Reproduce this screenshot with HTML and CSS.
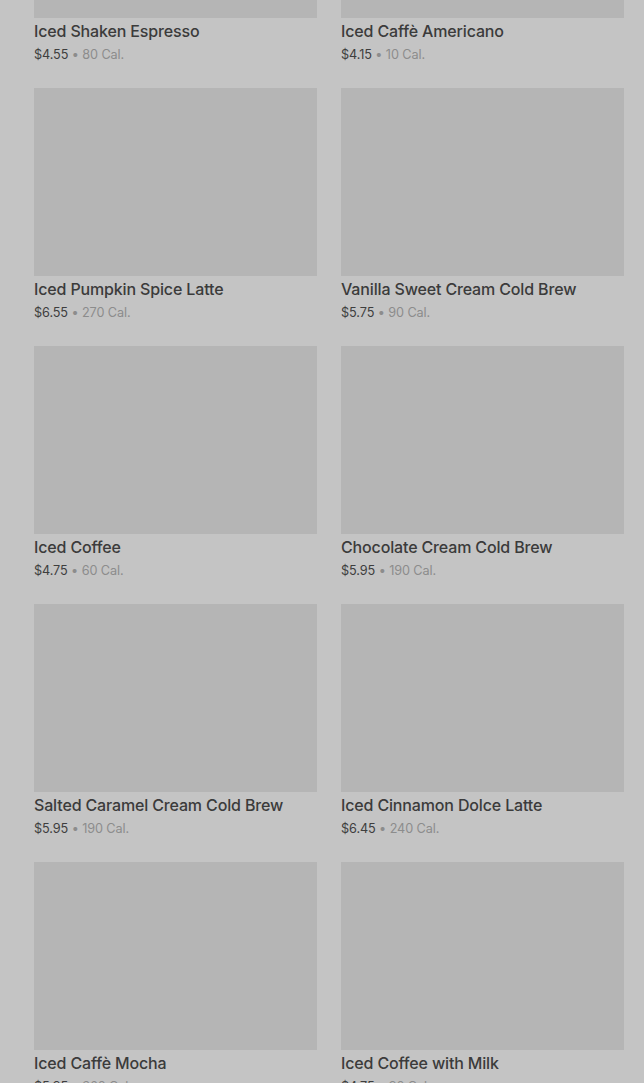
FILE: index.html
```html
<!DOCTYPE html>
<html lang="en">

<head>
    <meta charset="UTF-8">
    <meta name="viewport" content="width=device-width, initial-scale=1.0">
    <title>Cold Coffees</title>
    <link rel="stylesheet" href="styles.css">
</head>

<body>
    <div class="menu-grid">
        <div class="product">
            <div class="product-img"></div>
            <div class="product-name">Iced Shaken Espresso</div>
            <div class="product-meta"><span class="price">$4.55</span> • 80 Cal.</div>
        </div>
        <div class="product">
            <div class="product-img"></div>
            <div class="product-name">Iced Caffè Americano</div>
            <div class="product-meta"><span class="price">$4.15</span> • 10 Cal.</div>
        </div>
        <div class="product">
            <div class="product-img"></div>
            <div class="product-name">Iced Pumpkin Spice Latte</div>
            <div class="product-meta"><span class="price">$6.55</span> • 270 Cal.</div>
        </div>
        <div class="product">
            <div class="product-img"></div>
            <div class="product-name">Vanilla Sweet Cream Cold Brew</div>
            <div class="product-meta"><span class="price">$5.75</span> • 90 Cal.</div>
        </div>
        <div class="product">
            <div class="product-img"></div>
            <div class="product-name">Iced Coffee</div>
            <div class="product-meta"><span class="price">$4.75</span> • 60 Cal.</div>
        </div>
        <div class="product">
            <div class="product-img"></div>
            <div class="product-name">Chocolate Cream Cold Brew</div>
            <div class="product-meta"><span class="price">$5.95</span> • 190 Cal.</div>
        </div>
        <div class="product">
            <div class="product-img"></div>
            <div class="product-name">Salted Caramel Cream Cold Brew</div>
            <div class="product-meta"><span class="price">$5.95</span> • 190 Cal.</div>
        </div>
        <div class="product">
            <div class="product-img"></div>
            <div class="product-name">Iced Cinnamon Dolce Latte</div>
            <div class="product-meta"><span class="price">$6.45</span> • 240 Cal.</div>
        </div>
        <div class="product">
            <div class="product-img"></div>
            <div class="product-name">Iced Caffè Mocha</div>
            <div class="product-meta"><span class="price">$5.95</span> • 360 Cal.</div>
        </div>
        <div class="product">
            <div class="product-img"></div>
            <div class="product-name">Iced Coffee with Milk</div>
            <div class="product-meta"><span class="price">$4.75</span> • 90 Cal.</div>
        </div>
    </div>
</body>

</html>
```

FILE: styles.css
```css
body, html {
    margin: 0;
    padding: 0;
    width: 100%;
    height: 100%;
    overflow: hidden;
    background: #c4c4c4;
    font-family: 'Inter', 'Roboto', sans-serif;
}

.menu-grid {
    display: grid;
    grid-template-columns: 283px 283px;
    column-gap: 24px;
    row-gap: 23px;
    padding: 0 20px 0 34px;
    margin-top: -170px;
}

.product-img {
    height: 188px;
    background: #b5b5b5;
}

.product-name {
    margin-top: 2px;
    font-size: 16px;
    font-weight: 500;
    line-height: 22px;
    color: #3b3b3b;
    letter-spacing: -0.15px;
}

.product-meta {
    margin-top: 3px;
    font-size: 12.7px;
    line-height: 20px;
    color: #8c8c8c;
    letter-spacing: -0.1px;
}

.price {
    color: #3e3e3e;
}
```
